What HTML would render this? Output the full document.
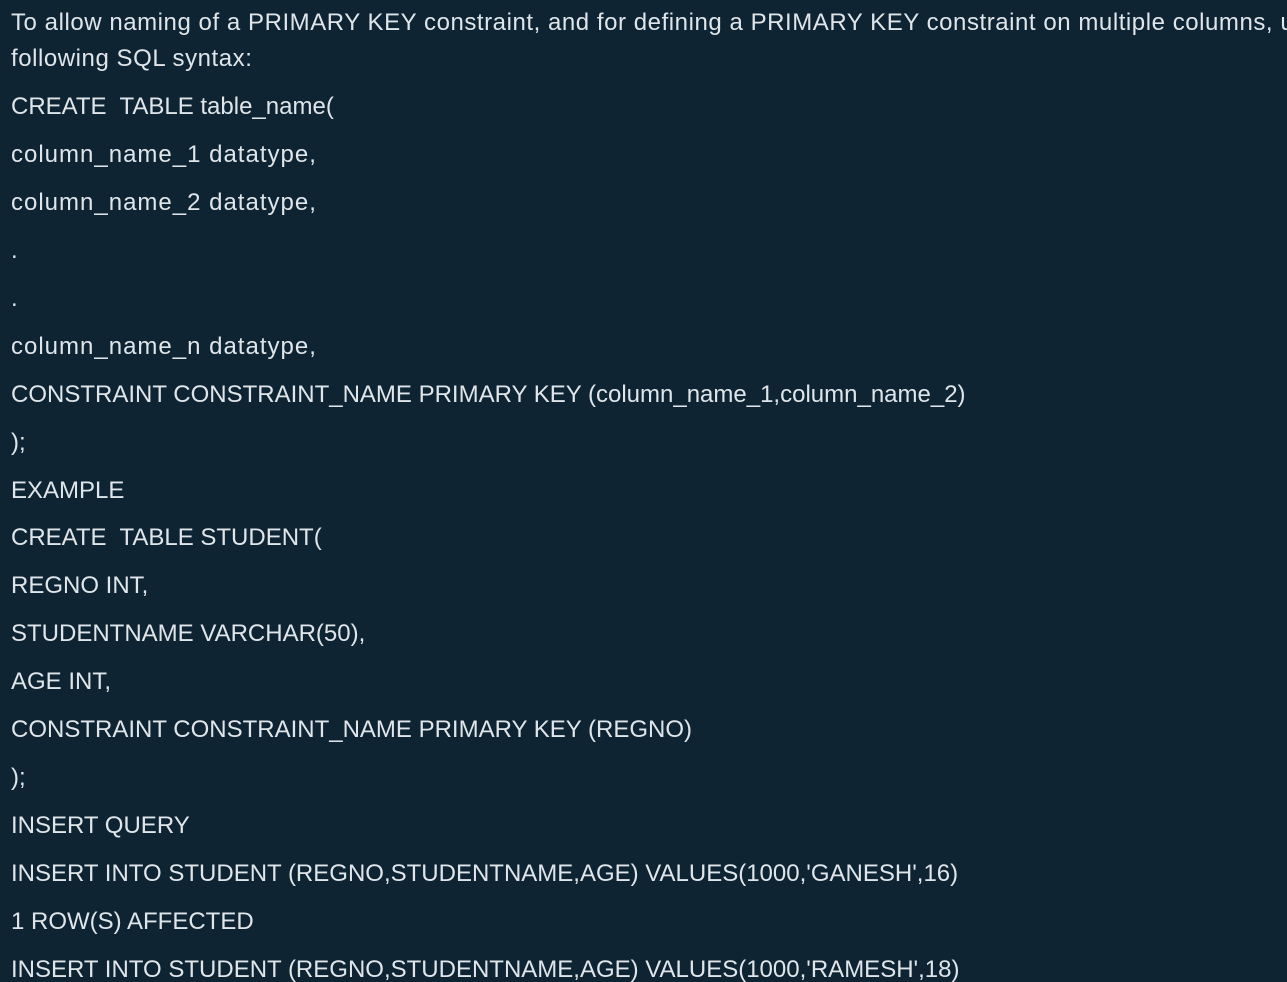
<!DOCTYPE html>
<html><head><meta charset="utf-8"><style>
html,body{margin:0;padding:0;width:1287px;height:982px;overflow:hidden;background:#0e2433;}
.w{position:absolute;left:11px;top:1px;width:1276px;height:981px;overflow:hidden;}
.l{position:absolute;left:0;white-space:nowrap;font-family:"Liberation Sans",sans-serif;font-size:24px;line-height:28px;color:#dfe5e9;}
.a{letter-spacing:0.55px}.b{letter-spacing:1px}
</style></head><body><div class="w">
<div class="l a" style="top:8px">To allow naming of a PRIMARY KEY constraint, and for defining a PRIMARY KEY constraint on multiple columns, u</div>
<div class="l a" style="top:44px">following SQL syntax:</div>
<div class="l" style="top:92px">CREATE&nbsp; TABLE table_name(</div>
<div class="l b" style="top:140px">column_name_1 datatype,</div>
<div class="l b" style="top:188px">column_name_2 datatype,</div>
<div class="l" style="top:236px">.</div>
<div class="l" style="top:284px">.</div>
<div class="l b" style="top:332px">column_name_n datatype,</div>
<div class="l" style="top:380px">CONSTRAINT CONSTRAINT_NAME PRIMARY KEY (column_name_1,column_name_2)</div>
<div class="l" style="top:428px">);</div>
<div class="l" style="top:476px">EXAMPLE</div>
<div class="l" style="top:523px">CREATE&nbsp; TABLE STUDENT(</div>
<div class="l" style="top:571px">REGNO INT,</div>
<div class="l" style="top:619px">STUDENTNAME VARCHAR(50),</div>
<div class="l" style="top:667px">AGE INT,</div>
<div class="l" style="top:715px">CONSTRAINT CONSTRAINT_NAME PRIMARY KEY (REGNO)</div>
<div class="l" style="top:763px">);</div>
<div class="l" style="top:811px">INSERT QUERY</div>
<div class="l" style="top:859px">INSERT INTO STUDENT (REGNO,STUDENTNAME,AGE) VALUES(1000,'GANESH',16)</div>
<div class="l" style="top:907px">1 ROW(S) AFFECTED</div>
<div class="l" style="top:955px">INSERT INTO STUDENT (REGNO,STUDENTNAME,AGE) VALUES(1000,'RAMESH',18)</div>
</div></body></html>
